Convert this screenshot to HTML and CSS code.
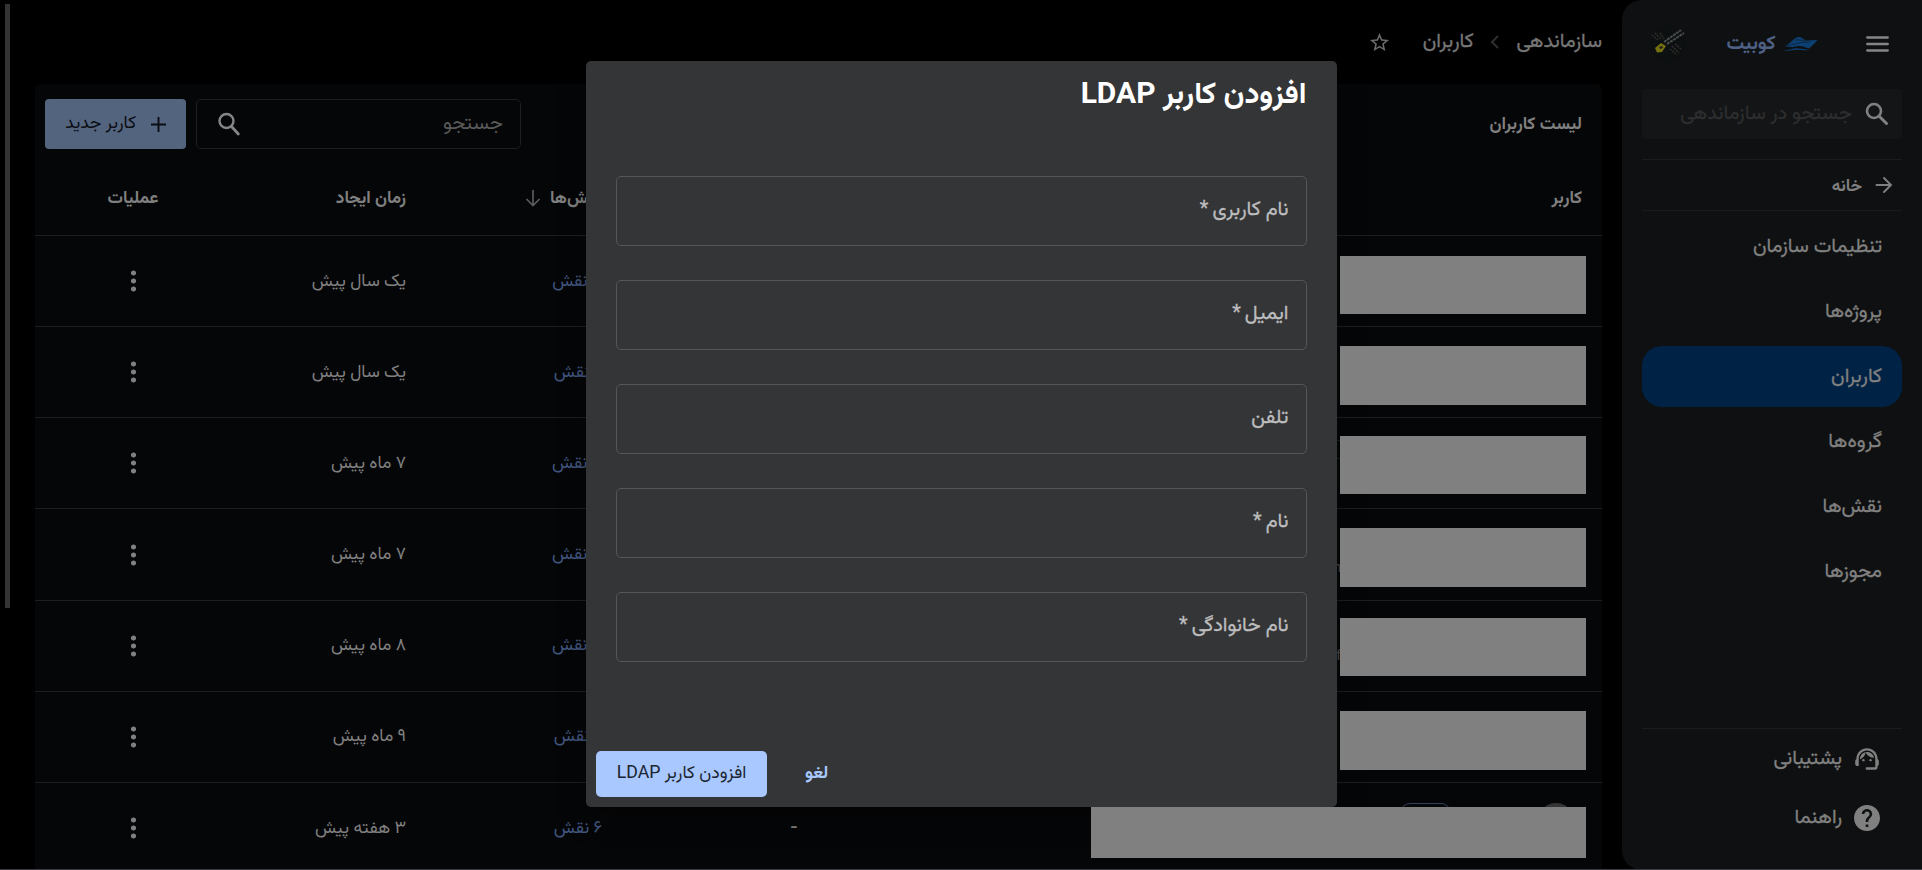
FILE: index.html
```html
<!DOCTYPE html>
<html lang="fa" dir="rtl">
<head>
<meta charset="utf-8">
<title>کاربران</title>
<link rel="stylesheet" href="styles.css">
</head>
<body>
<div class="app">
  <aside class="sidebar">
    <header class="brand-row">
      <svg class="menu-icon" width="23" height="16" viewBox="0 0 23 16"><path d="M1.2 1.5h20.6M1.2 8h20.6M1.2 14.5h20.6" stroke="currentColor" stroke-width="2.3" stroke-linecap="round"/></svg>
      <div class="brand">
        <svg width="36" height="16" viewBox="0 0 36 16"><path d="M3 10C8 7.500 10 4.500 13 2.500c3-2 6-2 8 .2l3 1.800 11.500-.5c-3 3.500-6 6.500-8.500 8.500-5-1.500-8-3.500-14-2C9 11.500 6 11 3 10z" fill="#0c3f72"/><path d="M0 15c7-.5 11-3 17-2.600 4 .3 7 1.400 10 .8-3 2-7 .8-11 .6C10 13.600 6 15.600 0 15z" fill="#0c3f72"/><path d="M4 9.500c8-.5 12-3.500 24-3.500M13 4c4-.8 8 .8 11 1" stroke="#0f1011" stroke-width=".5" fill="none"/></svg>
        <span class="brand-name">کوبیت</span>
      </div>
      <svg class="avatar" width="36" height="36" viewBox="0 0 36 36"><circle cx="18" cy="18" r="17.500" fill="#0c1011"/><path d="M2 9l6 5M5 7l6 6M10 7l4 6M22 20l7 7M25 18l6 5M20 23l6 5" stroke="#332c2b" stroke-width="1.500" stroke-dasharray="2 1"/><path d="M14 16L31 4M17 18L34 7" stroke="#4b4c4d" stroke-width="2" stroke-dasharray="3 .7"/><path d="M5 22l6-5 5 3-4 6-5 .5z" fill="#74700e"/><path d="M9 21l3-1 1 2-3 1z" fill="#222"/></svg>
    </header>
    <div class="side-search">
      <svg width="24" height="24" viewBox="0 0 24 24"><circle cx="9" cy="9" r="7" fill="none" stroke="currentColor" stroke-width="2.600"/><path d="M14 14l7.500 7.500" stroke="currentColor" stroke-width="3" stroke-linecap="round"/></svg>
      <span class="t side-ph">جستجو در سازماندهی</span>
    </div>
    <div class="home">
      <svg width="18" height="18" viewBox="0 0 18 18"><path d="M1.500 9h14M9 2l7 7-7 7" fill="none" stroke="currentColor" stroke-width="1.900" stroke-linecap="round"/></svg>
      <span class="t home-t">خانه</span>
    </div>
    <nav class="nav">
      <a class="item"><span class="t">تنظیمات سازمان</span></a>
      <a class="item"><span class="t">پروژه‌ها</span></a>
      <a class="item active"><span class="t">کاربران</span></a>
      <a class="item"><span class="t">گروه‌ها</span></a>
      <a class="item"><span class="t">نقش‌ها</span></a>
      <a class="item"><span class="t">مجوزها</span></a>
    </nav>
    <footer class="side-foot">
      <a class="foot-item">
        <svg width="26" height="26" viewBox="1 1 22 22" fill="currentColor"><path d="M21 12.220C21 6.730 16.740 3 12 3c-4.690 0-9 3.650-9 9.280-.6.340-1 .98-1 1.720v2c0 1.100.9 2 2 2h1v-6.100c0-3.870 3.130-7 7-7s7 3.130 7 7V19h-8v2h8c1.100 0 2-.9 2-2v-1.220c.59-.31 1-.92 1-1.640v-2.300c0-.7-.41-1.310-1-1.620z"/><circle cx="9" cy="13" r="1"/><circle cx="15" cy="13" r="1"/><path d="M18 11.030C17.520 8.180 15.040 6 12.050 6c-3.030 0-6.290 2.510-6.030 6.450 2.470-1.010 4.330-3.210 4.860-5.890 1.310 2.630 4 4.440 7.120 4.470z"/></svg>
        <span class="t">پشتیبانی</span>
      </a>
      <a class="foot-item">
        <svg width="26" height="26" viewBox="2 2 20 20" fill="currentColor"><path d="M12 2C6.480 2 2 6.480 2 12s4.480 10 10 10 10-4.480 10-10S17.520 2 12 2zm1 17h-2v-2h2v2zm2.070-7.750l-.9.920C13.450 12.900 13 13.500 13 15h-2v-.5c0-1.100.45-2.100 1.170-2.830l1.240-1.260c.37-.36.59-.86.59-1.410 0-1.100-.9-2-2-2s-2 .9-2 2H8c0-2.210 1.790-4 4-4s4 1.790 4 4c0 .88-.36 1.680-.93 2.250z"/></svg>
        <span class="t">راهنما</span>
      </a>
    </footer>
  </aside>
  <main class="main">
    <div class="crumbs">
      <span class="t crumb-a">سازماندهی</span>
      <svg class="chev" width="9" height="14" viewBox="0 0 9 14"><path d="M8 1L2 7l6 6" fill="none" stroke="#303032" stroke-width="1.900"/></svg>
      <span class="t crumb-b">کاربران</span>
      <svg class="star" width="19" height="19" viewBox="2 2 20 20" fill="#6c6c6c"><path d="M22 9.240l-7.190-.62L12 2 9.190 8.630 2 9.240l5.460 4.730L5.820 21 12 17.270 18.180 21l-1.630-7.030L22 9.240zM12 15.400l-3.760 2.270 1-4.280-3.320-2.880 4.380-.38L12 6.100l1.710 4.040 4.380.38-3.320 2.880 1 4.280L12 15.400z"/></svg>
    </div>
    <section class="card">
      <div class="toolbar">
        <h2 class="t card-title">لیست کاربران</h2>
        <div class="search">
          <span class="t">جستجو</span>
          <svg width="22" height="24" viewBox="0 0 22 24"><circle cx="8.500" cy="9" r="7" fill="none" stroke="currentColor" stroke-width="2.400"/><path d="M13.500 14.500l6.800 7.500" stroke="currentColor" stroke-width="2.800" stroke-linecap="round"/></svg>
        </div>
        <button class="new-user">
          <svg width="15" height="15" viewBox="0 0 15 15"><path d="M7.500 0v15M0 7.500h15" stroke="currentColor" stroke-width="1.900"/></svg>
          <span class="t">کاربر جدید</span>
        </button>
      </div>
      <div class="row head">
        <div class="c-user"><span class="t">کاربر</span></div>
        <div class="c-phone"></div>
        <div class="c-roles"><span class="t">نقش‌ها</span><svg width="16" height="17" viewBox="0 0 16 17"><path d="M8 0v15M1.500 9L8 15.500 14.500 9" fill="none" stroke="#5c5c5d" stroke-width="1.700"/></svg></div>
        <div class="c-time"><span class="t">زمان ایجاد</span></div>
        <div class="c-ops"><span class="t">عملیات</span></div>
      </div>
      <div class="row"><div class="c-user"><div class="mask m1"></div></div><div class="c-phone"></div><div class="c-roles"><span class="t">۱۱ نقش</span></div><div class="c-time"><span class="t">یک سال پیش</span></div><div class="c-ops"><i class="dots"></i></div></div>
      <div class="row"><div class="c-user"><div class="mask m2"></div></div><div class="c-phone"></div><div class="c-roles"><span class="t">۶ نقش</span></div><div class="c-time"><span class="t">یک سال پیش</span></div><div class="c-ops"><i class="dots"></i></div></div>
      <div class="row"><div class="c-user"><div class="mask m3"></div><i class="sliver"></i></div><div class="c-phone"></div><div class="c-roles"><span class="t">۷ نقش</span></div><div class="c-time"><span class="t">۷ ماه پیش</span></div><div class="c-ops"><i class="dots"></i></div></div>
      <div class="row"><div class="c-user"><div class="mask m4"></div><span class="peek p4">h</span></div><div class="c-phone"></div><div class="c-roles"><span class="t">۷ نقش</span></div><div class="c-time"><span class="t">۷ ماه پیش</span></div><div class="c-ops"><i class="dots"></i></div></div>
      <div class="row"><div class="c-user"><div class="mask m5"></div><span class="peek p5">f</span></div><div class="c-phone"></div><div class="c-roles"><span class="t">۷ نقش</span></div><div class="c-time"><span class="t">۸ ماه پیش</span></div><div class="c-ops"><i class="dots"></i></div></div>
      <div class="row"><div class="c-user"><div class="mask m6"></div></div><div class="c-phone"></div><div class="c-roles"><span class="t">۶ نقش</span></div><div class="c-time"><span class="t">۹ ماه پیش</span></div><div class="c-ops"><i class="dots"></i></div></div>
      <div class="row"><div class="c-user"><i class="face"></i><i class="chip"></i><div class="mask m7"></div></div><div class="c-phone"><span class="t dash">-</span></div><div class="c-roles"><span class="t">۶ نقش</span></div><div class="c-time"><span class="t">۳ هفته پیش</span></div><div class="c-ops"><i class="dots"></i></div></div>
    </section>
  </main>
  <div class="scroll"></div>
  <div class="bottom-edge"></div>
  <div class="dialog">
    <h1 class="t dialog-title">افزودن کاربر LDAP</h1>
    <div class="fields">
      <div class="field"><span class="t">نام کاربری&thinsp;*</span></div>
      <div class="field"><span class="t">ایمیل&thinsp;*</span></div>
      <div class="field"><span class="t">تلفن</span></div>
      <div class="field"><span class="t">نام&thinsp;*</span></div>
      <div class="field"><span class="t">نام خانوادگی&thinsp;*</span></div>
    </div>
    <div class="actions">
      <button class="cancel"><span class="t">لغو</span></button>
      <button class="submit"><span class="t">افزودن کاربر LDAP</span></button>
    </div>
  </div>
</div>
</body>
</html>
```
FILE: styles.css
```css
* { box-sizing: border-box; }
body { margin: 0; background: #000001; color: #808080; font-family: Roboto, "Vazirmatn", "Noto Sans Arabic", "DejaVu Sans", sans-serif; font-size: 20px; }
button { border: 0; font: inherit; padding: 0; }
h1, h2 { margin: 0; }
.t { white-space: nowrap; line-height: 24px; display: block; padding-bottom: 4px; }
.item .t, .foot-item .t, .field .t, .side-ph, .crumbs .t { -webkit-text-stroke: .3px currentColor; }
.app { position: relative; display: flex; width: 1922px; height: 870px; overflow: hidden; }
.sidebar { width: 300px; flex: none; background: #0f1011; border-radius: 20px 0 0 20px; padding: 0 20px; display: flex; flex-direction: column; }
.brand-row { height: 89px; padding: 0 13px 1px 8px; display: flex; align-items: center; justify-content: space-between; }
.menu-icon { color: #858585; }
.brand { display: flex; align-items: center; gap: 6px; margin-right: 8px; }
.brand-name { font-size: 19.500px; font-weight: bold; color: #4e6085; line-height: 24px; padding-bottom: 3px; }
.side-search { height: 50px; background: #141516; border-radius: 4px; display: flex; align-items: center; gap: 13px; padding: 0 13px; }
.side-ph { color: #2d2e2f; padding-bottom: 5px; }
.home { height: 52px; margin-top: 20px; border-top: 1px solid #1a1b1c; border-bottom: 1px solid #1a1b1c; display: flex; align-items: center; gap: 13px; padding: 0 9px; }
.home-t { font-weight: bold; font-size: 17px; padding-bottom: 1px; }
.nav { display: flex; flex-direction: column; gap: 4px; margin-top: 5px; }
.item { height: 61px; border-radius: 20px; padding: 0 20px; display: flex; align-items: center; }
.item .t { padding-bottom: 4px; }
.item.active { background: #002345; }
.side-foot { margin-top: auto; height: 142px; border-top: 1px solid #1a1b1c; display: flex; flex-direction: column; }
.foot-item { height: 59.500px; padding-right: 22px; display: flex; align-items: center; gap: 12px; }
.main { width: 1567px; margin-right: 20px; flex: none; display: flex; flex-direction: column; }
.crumbs { height: 84px; display: flex; align-items: center; color: #777; }
.chev { margin: 0 18px 0 16px; }
.star { margin-right: 34px; }
.card { background: #050607; border-radius: 6px 6px 0 0; height: 786px; overflow: hidden; }
.toolbar { height: 77px; padding: 15px 20px 12px 10px; display: flex; gap: 10px; }
.card-title { font-size: 17.300px; font-weight: bold; margin: 12px 0 0 auto; }
.search { width: 325px; height: 50px; border: 1px solid #1e1f20; border-radius: 5px; display: flex; align-items: center; justify-content: space-between; padding: 0 17px 0 21px; color: #5a5a5a; }
.search svg { color: #858585; }
.new-user { width: 141px; height: 50px; border-radius: 4px; background: #53647f; color: #0a0d12; display: flex; align-items: center; gap: 15px; padding-right: 20px; font-size: 17.700px; }
.row { height: 91.170px; border-bottom: 1px solid #1e1f20; display: flex; align-items: center; font-size: 17.500px; flex: none; }
.row .t { padding-bottom: 3px; }
.row.head { height: 75px; font-weight: bold; font-size: 17.200px; }
.row.head .t { padding-bottom: 2px; }
.c-user { width: 516px; align-self: stretch; padding-right: 16px; position: relative; flex: none; }
.head .c-user { padding-right: 20px; display: flex; align-items: center; }
.c-phone { width: 484px; padding-right: 289px; flex: none; }
.dash { font-size: 23px; }
.c-roles { width: 196px; color: #425780; display: flex; align-items: center; gap: 9px; flex: none; }
.head .c-roles { color: #808080; }
.c-time { width: 200px; flex: none; }
.c-ops { width: 146px; display: flex; justify-content: center; flex: none; }
.dots { width: 5px; height: 24px; background: radial-gradient(circle 2.800px at center, #808080 80%, transparent) 0 0 / 5px 8px; }
.mask { position: relative; z-index: 2; width: 246px; height: 58px; top: 0; margin-top: 19px; background: #808080; }
.m1 { margin-top: 20px; }
.m3 { margin-top: 18px; }
.m5 { margin-top: 17px; }
.m2, .m4, .m6 { height: 59px; }
.m7 { position: absolute; right: 16px; width: 495px; height: 51px; margin-top: 24px; }
.sliver { position: absolute; left: 251px; top: 22px; width: 4px; height: 19px; border: solid #122018; border-width: 1px 0; }
.peek { position: absolute; left: 247px; font-size: 15px; line-height: 18px; color: #4d4545; }
.p4 { top: 49px; }
.p5 { top: 45px; left: 250px; }
.face { position: absolute; right: 28px; top: 20px; width: 36px; height: 36px; border-radius: 50%; background: #353535; }
.chip { position: absolute; right: 151px; top: 20px; width: 51px; height: 28px; border: 1px solid #34415a; border-radius: 10px; }
.scroll { position: absolute; left: 5px; top: 4px; width: 5px; height: 604px; background: #343434; }
.bottom-edge { position: absolute; left: 0; bottom: 0; width: 100%; height: 1px; background: #3c3b42; }
.dialog { position: absolute; z-index: 1; left: 586px; top: 61px; width: 750.500px; height: 746px; background: #343536; border-radius: 5px; box-shadow: 0 10px 30px rgba(0,0,0,.3); display: flex; flex-direction: column; }
.dialog-title { color: #fff; font-size: 30px; line-height: 36px; padding: 13.500px 30px 0; }
.fields { display: flex; flex-direction: column; gap: 33.700px; padding: 65.500px 30px 0; }
.field { height: 70.300px; border: 1px solid #555657; border-radius: 5px; padding: 0 17px; display: flex; align-items: center; color: #bdbdbe; }
.field .t { padding-bottom: 6px; }
.actions { margin-top: auto; padding: 0 0 10px 10px; display: flex; justify-content: flex-end; gap: 38px; }
.cancel { background: none; color: #a8c8ff; font-weight: bold; font-size: 17.500px; }
.submit { width: 171px; height: 46px; border-radius: 5px; background: #a8c8ff; color: #1b2430; font-size: 17.700px; display: flex; align-items: center; justify-content: center; }
```
